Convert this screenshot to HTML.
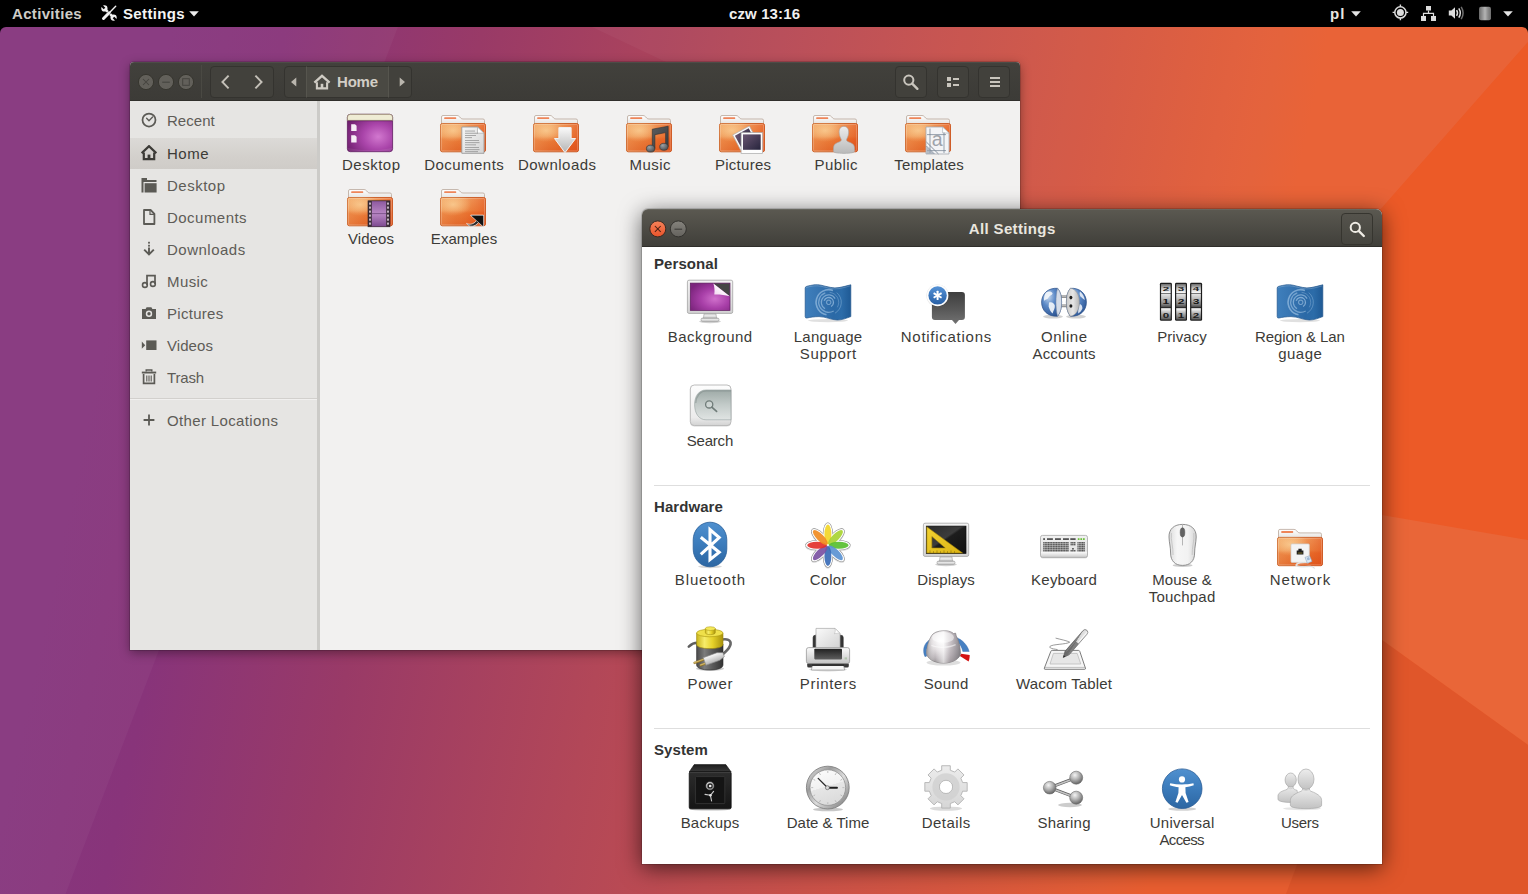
<!DOCTYPE html>
<html lang="en"><head><meta charset="utf-8"><title>Desktop</title>
<style>
html,body{margin:0;padding:0;width:1528px;height:894px;overflow:hidden;background:#000;font-family:"Liberation Sans",sans-serif;}
*{box-sizing:border-box}
.abs{position:absolute}
#wall{position:absolute;left:0;top:27px;width:1528px;height:867px;border-radius:6px 6px 0 0;overflow:hidden}
#wall svg{display:block}
#topbar{position:absolute;left:0;top:0;width:1528px;height:27px;background:#000;color:#e3e1dc;font-weight:bold;font-size:15px;line-height:27px}
#topbar span{position:absolute;top:0;white-space:nowrap}
#topbar svg{position:absolute}
.win{position:absolute;border-radius:6px 6px 0 0}
.hdr{position:absolute;left:0;top:0;right:0;border-radius:6px 6px 0 0}
.hbtn{position:absolute;border:1px solid #34332f;border-radius:4px;background:#42413c}
.ico{position:absolute;width:48px;height:48px}
.ico svg{display:block;width:48px;height:48px;overflow:visible}
.lbl{position:absolute;text-align:center;white-space:nowrap;font-size:15px;line-height:17px;color:#3c3b37}
#files .lbl{width:120px;margin-left:-60px}
#settings .lbl{width:118px;margin-left:-59px;color:#3c3b37}
.sec{position:absolute;left:12px;font-weight:bold;font-size:15px;line-height:17px;color:#333}
.sep{position:absolute;left:12px;width:716px;height:1px;background:#dedede}
.sb{position:absolute;left:37px;font-size:15px;line-height:17px;color:#5e5c57;white-space:nowrap}
.sbi{position:absolute;left:11px;width:16px;height:16px}
.sbi svg{display:block;width:16px;height:16px}
</style></head><body>
<svg width="0" height="0" style="position:absolute"><defs><linearGradient id="fBack" x1="0" y1="0" x2="0" y2="1"><stop offset="0" stop-color="#ffffff"/><stop offset="1" stop-color="#e4e2df"/></linearGradient>
<linearGradient id="fFront" x1="0" y1="0" x2="0" y2="1"><stop offset="0" stop-color="#f2a565"/><stop offset="0.45" stop-color="#ec8a45"/><stop offset="0.55" stop-color="#e8722e"/><stop offset="1" stop-color="#de5a1d"/></linearGradient>
<linearGradient id="fSide" x1="0" y1="0" x2="1" y2="0"><stop offset="0" stop-color="#f6b87a" stop-opacity="0.35"/><stop offset="0.35" stop-color="#f6b87a" stop-opacity="0.15"/><stop offset="0.7" stop-color="#e6531c" stop-opacity="0.25"/><stop offset="1" stop-color="#e04a18" stop-opacity="0.55"/></linearGradient>
<radialGradient id="fGlow" cx="0.28" cy="0.25" r="0.4"><stop offset="0" stop-color="#fbd39a" stop-opacity="0.75"/><stop offset="1" stop-color="#fbd39a" stop-opacity="0"/></radialGradient>
<linearGradient id="gPaper" x1="0" y1="0" x2="1" y2="1"><stop offset="0" stop-color="#f6f6f6"/><stop offset="1" stop-color="#d4d4d4"/></linearGradient>
<linearGradient id="gArrow" x1="0" y1="0" x2="0" y2="1"><stop offset="0" stop-color="#fafafa"/><stop offset="1" stop-color="#b4b4b4"/></linearGradient>
<linearGradient id="gNote" x1="0" y1="0" x2="1" y2="1"><stop offset="0" stop-color="#5a5c5e"/><stop offset="1" stop-color="#3a3c3e"/></linearGradient>
<radialGradient id="gBulb" cx="0.35" cy="0.3" r="0.8"><stop offset="0" stop-color="#9aa0a4"/><stop offset="1" stop-color="#43474a"/></radialGradient>
<linearGradient id="gPhoto" x1="0" y1="0" x2="1" y2="1"><stop offset="0" stop-color="#6a5672"/><stop offset="1" stop-color="#26243c"/></linearGradient>
<linearGradient id="gUser" x1="0" y1="0" x2="0" y2="1"><stop offset="0" stop-color="#ececec"/><stop offset="1" stop-color="#b9b9b9"/></linearGradient>
<radialGradient id="gDesk" cx="0.68" cy="0.6" r="0.75"><stop offset="0" stop-color="#d278cf"/><stop offset="0.45" stop-color="#aa45aa"/><stop offset="1" stop-color="#70206f"/></radialGradient>
<linearGradient id="gFilm" x1="0" y1="0" x2="0" y2="1"><stop offset="0" stop-color="#8e5aa0"/><stop offset="0.5" stop-color="#b987c4"/><stop offset="1" stop-color="#7d4a90"/></linearGradient><radialGradient id="bgScr" cx="0.62" cy="0.58" r="0.7"><stop offset="0" stop-color="#d070cc"/><stop offset="0.5" stop-color="#a83fa8"/><stop offset="1" stop-color="#7c257d"/></radialGradient>
<linearGradient id="monFrame" x1="0" y1="0" x2="0" y2="1"><stop offset="0" stop-color="#f4f4f4"/><stop offset="1" stop-color="#d2d2d2"/></linearGradient>
<linearGradient id="monStand" x1="0" y1="0" x2="0" y2="1"><stop offset="0" stop-color="#b4b4b4"/><stop offset="0.5" stop-color="#ececec"/><stop offset="1" stop-color="#bdbdbd"/></linearGradient>
<linearGradient id="curl" x1="0" y1="1" x2="1" y2="0"><stop offset="0" stop-color="#f0d0ef"/><stop offset="0.6" stop-color="#ffffff"/><stop offset="1" stop-color="#d9d9d9"/></linearGradient>
<linearGradient id="flagG" x1="0" y1="0" x2="1" y2="0"><stop offset="0" stop-color="#3f7fbc"/><stop offset="0.3" stop-color="#3775b2"/><stop offset="0.62" stop-color="#2b69a6"/><stop offset="0.8" stop-color="#2c6ca9"/><stop offset="1" stop-color="#1f5a95"/></linearGradient>
<linearGradient id="bubG" x1="0" y1="0" x2="0" y2="1"><stop offset="0" stop-color="#3e3e3e"/><stop offset="0.55" stop-color="#585858"/><stop offset="1" stop-color="#727272"/></linearGradient>
<linearGradient id="badgeG" x1="0" y1="0" x2="0" y2="1"><stop offset="0" stop-color="#5592d6"/><stop offset="1" stop-color="#2860a6"/></linearGradient>
<radialGradient id="globeG" cx="0.35" cy="0.3" r="0.85"><stop offset="0" stop-color="#c2d6ee"/><stop offset="0.4" stop-color="#5a88c6"/><stop offset="1" stop-color="#234a88"/></radialGradient>
<linearGradient id="sockG" x1="0" y1="0" x2="1" y2="0"><stop offset="0" stop-color="#c9c9c9"/><stop offset="0.5" stop-color="#e6e6e6"/><stop offset="1" stop-color="#b5b5b5"/></linearGradient>
<linearGradient id="prongG" x1="0" y1="0" x2="0" y2="1"><stop offset="0" stop-color="#e0e0e0"/><stop offset="1" stop-color="#8a8a8a"/></linearGradient><linearGradient id="pvT" x1="0" y1="0" x2="0" y2="1"><stop offset="0" stop-color="#6e6e6e"/><stop offset="0.5" stop-color="#c9c9c9"/><stop offset="1" stop-color="#ffffff"/></linearGradient>
<linearGradient id="pvM" x1="0" y1="0" x2="0" y2="1"><stop offset="0" stop-color="#e4e4e4"/><stop offset="0.35" stop-color="#bdbdbd"/><stop offset="0.8" stop-color="#7a7a7a"/><stop offset="1" stop-color="#444"/></linearGradient>
<linearGradient id="pvB" x1="0" y1="0" x2="0" y2="1"><stop offset="0" stop-color="#ffffff"/><stop offset="0.5" stop-color="#a9a9a9"/><stop offset="1" stop-color="#5a5a5a"/></linearGradient>
<linearGradient id="srO" x1="0" y1="0" x2="0" y2="1"><stop offset="0" stop-color="#fdfdfd"/><stop offset="0.8" stop-color="#ececec"/><stop offset="1" stop-color="#d2d2d2"/></linearGradient>
<linearGradient id="srI" x1="0" y1="0" x2="0" y2="1"><stop offset="0" stop-color="#9eaaa7"/><stop offset="0.5" stop-color="#c3cbc9"/><stop offset="1" stop-color="#e0e4e3"/></linearGradient>
<linearGradient id="btG" x1="0" y1="0" x2="0" y2="1"><stop offset="0" stop-color="#4f90cf"/><stop offset="0.5" stop-color="#3b7bbb"/><stop offset="1" stop-color="#2c66a2"/></linearGradient>
<filter id="flSh" x="-20%" y="-20%" width="140%" height="140%"><feDropShadow dx="0" dy="0.5" stdDeviation="0.6" flood-color="#000" flood-opacity="0.25"/></filter>
<linearGradient id="dsScr" x1="0" y1="0" x2="1" y2="1"><stop offset="0" stop-color="#2a2a2a"/><stop offset="0.45" stop-color="#3c3c3c"/><stop offset="0.5" stop-color="#1d1d1d"/><stop offset="1" stop-color="#101010"/></linearGradient>
<linearGradient id="dsY" x1="0" y1="0" x2="1" y2="1"><stop offset="0" stop-color="#f2d232"/><stop offset="1" stop-color="#dcb414"/></linearGradient>
<linearGradient id="kbG" x1="0" y1="0" x2="0" y2="1"><stop offset="0" stop-color="#f1f1f1"/><stop offset="0.7" stop-color="#e2e2e2"/><stop offset="0.78" stop-color="#f6f6f6"/><stop offset="1" stop-color="#c9c9c9"/></linearGradient>
<pattern id="kbK" x="3.2" y="21" width="1.62" height="2" patternUnits="userSpaceOnUse"><rect x="0" y="0" width="1.3" height="1.6" fill="#555"/></pattern>
<linearGradient id="msG" x1="0" y1="0" x2="1" y2="0"><stop offset="0" stop-color="#dcdcdc"/><stop offset="0.3" stop-color="#f6f6f6"/><stop offset="0.7" stop-color="#f2f2f2"/><stop offset="1" stop-color="#d4d4d4"/></linearGradient><linearGradient id="pwY" x1="0" y1="0" x2="1" y2="0"><stop offset="0" stop-color="#c9b41a"/><stop offset="0.3" stop-color="#f6ec6a"/><stop offset="0.6" stop-color="#e6d22a"/><stop offset="1" stop-color="#a8920c"/></linearGradient>
<linearGradient id="pwG" x1="0" y1="0" x2="1" y2="0"><stop offset="0" stop-color="#4a4a4a"/><stop offset="0.3" stop-color="#7c7c7c"/><stop offset="0.6" stop-color="#5a5a5a"/><stop offset="1" stop-color="#333"/></linearGradient>
<linearGradient id="pwP" x1="0" y1="0" x2="0" y2="1"><stop offset="0" stop-color="#fafafa"/><stop offset="1" stop-color="#b5b5b5"/></linearGradient>
<linearGradient id="pwGold" x1="0" y1="0" x2="0" y2="1"><stop offset="0" stop-color="#f0d890"/><stop offset="1" stop-color="#a8862a"/></linearGradient>
<linearGradient id="prB" x1="0" y1="0" x2="0" y2="1"><stop offset="0" stop-color="#fbfbfb"/><stop offset="1" stop-color="#c4c4c4"/></linearGradient>
<linearGradient id="prD" x1="0" y1="0" x2="0" y2="1"><stop offset="0" stop-color="#222"/><stop offset="1" stop-color="#5e5e5e"/></linearGradient>
<linearGradient id="prP" x1="0" y1="0" x2="1" y2="1"><stop offset="0" stop-color="#fafafa"/><stop offset="1" stop-color="#d2d2d2"/></linearGradient>
<radialGradient id="sdK" cx="0.42" cy="0.3" r="0.75"><stop offset="0" stop-color="#ffffff"/><stop offset="0.4" stop-color="#e4e0e2"/><stop offset="0.75" stop-color="#b8b2b6"/><stop offset="1" stop-color="#8e8a8c"/></radialGradient>
<linearGradient id="sdS" x1="0" y1="0" x2="1" y2="0"><stop offset="0" stop-color="#9a9698" stop-opacity="0.7"/><stop offset="0.25" stop-color="#fff" stop-opacity="0"/><stop offset="0.5" stop-color="#fff" stop-opacity="0.6"/><stop offset="0.7" stop-color="#b0a8ae" stop-opacity="0.5"/><stop offset="1" stop-color="#77747a" stop-opacity="0.7"/></linearGradient>
<linearGradient id="wcP" x1="0" y1="1" x2="1" y2="0"><stop offset="0" stop-color="#5a5a5a"/><stop offset="0.45" stop-color="#8a8a8a"/><stop offset="0.5" stop-color="#d8d8d8"/><stop offset="1" stop-color="#f2f2f2"/></linearGradient>
<linearGradient id="bkF" x1="0" y1="0" x2="0" y2="1"><stop offset="0" stop-color="#2c2c2c"/><stop offset="1" stop-color="#151515"/></linearGradient>
<linearGradient id="bkT" x1="0" y1="0" x2="0" y2="1"><stop offset="0" stop-color="#1e1e1e"/><stop offset="1" stop-color="#3a3a3a"/></linearGradient>
<radialGradient id="bkD" cx="0.4" cy="0.35" r="0.7"><stop offset="0" stop-color="#f4f4f4"/><stop offset="1" stop-color="#7c7c7c"/></radialGradient>
<linearGradient id="dtR" x1="0" y1="0" x2="1" y2="1"><stop offset="0" stop-color="#eeeeee"/><stop offset="0.3" stop-color="#9c9c9c"/><stop offset="0.55" stop-color="#dcdcdc"/><stop offset="1" stop-color="#6e6e6e"/></linearGradient>
<linearGradient id="dtF" x1="0" y1="0" x2="0.3" y2="1"><stop offset="0" stop-color="#fdfdfd"/><stop offset="0.55" stop-color="#f1f1f1"/><stop offset="0.56" stop-color="#e6e6e6"/><stop offset="1" stop-color="#dcdcdc"/></linearGradient>
<linearGradient id="grG" x1="0" y1="0" x2="0" y2="1"><stop offset="0" stop-color="#ececec"/><stop offset="1" stop-color="#d6d6d6"/></linearGradient>
<radialGradient id="shB" cx="0.4" cy="0.3" r="0.75"><stop offset="0" stop-color="#f4f4f4"/><stop offset="0.45" stop-color="#b4b4b4"/><stop offset="1" stop-color="#5a5a5a"/></radialGradient>
<linearGradient id="usG" x1="0" y1="0" x2="0" y2="1"><stop offset="0" stop-color="#ededed"/><stop offset="1" stop-color="#c2c2c2"/></linearGradient></defs></svg>
<div id="wall"><svg width="1528" height="867" viewBox="0 27 1528 867">
<defs>
<linearGradient id="wg" gradientUnits="userSpaceOnUse" x1="180" y1="-20" x2="1290" y2="215">
<stop offset="0" stop-color="#86367e"/>
<stop offset="0.1" stop-color="#88347a"/>
<stop offset="0.27" stop-color="#993a67"/>
<stop offset="0.485" stop-color="#b24758"/>
<stop offset="0.75" stop-color="#ce5346"/>
<stop offset="0.96" stop-color="#e45e35"/>
<stop offset="1" stop-color="#e95e30"/>
</linearGradient>
</defs>
<rect x="0" y="27" width="1528" height="867" fill="url(#wg)"/>
<!-- facets -->
<polygon points="0,27 398,27 65.6,894 0,894" fill="#fff" fill-opacity="0.035"/>
<polygon points="592,27 1528,27 1528,42 1380,210 1020,210 1020,62 666,62" fill="#fff" fill-opacity="0.035"/>
<polygon points="1528,42 1380,210 1380,520 1528,540" fill="#ec5a27"/>
<polygon points="1382,515 1528,540 1528,745 1382,640" fill="#e96638"/>
<polygon points="1382,640 1528,745 1528,894 1286,894" fill="#e0562a"/>
</svg></div>
<div id="topbar">
<span style="left:12px;color:#cfcdc8;letter-spacing:0.33px">Activities</span>
<svg style="left:101px;top:5px" width="16" height="16" viewBox="0 0 16 16">
<path d="M3.6,3.6 L12.4,12.4" stroke="#f2f2f2" stroke-width="2.4"/>
<circle cx="3.4" cy="3.4" r="3.1" fill="#f2f2f2"/><path d="M4.3,2.7 L2.7,4.3 L-0.6,1 L1,-0.6 Z" fill="#000"/>
<circle cx="12.6" cy="12.6" r="3.1" fill="#f2f2f2"/><path d="M13.3,11.7 L11.7,13.3 L15,16.6 L16.6,15 Z" fill="#000"/>
<path d="M12.6,3.4 L3.4,12.6" stroke="#000" stroke-width="3.4"/>
<path d="M14.7,1.3 L8.6,7.4" stroke="#f2f2f2" stroke-width="1.4" stroke-linecap="round"/>
<path d="M8.2,7.8 L2.5,13.5" stroke="#f2f2f2" stroke-width="3" stroke-linecap="round"/>
</svg>
<span style="left:123px;color:#f4f4f4;letter-spacing:0.36px">Settings</span>
<svg style="left:189px;top:11px" width="10" height="6" viewBox="0 0 10 6"><path d="M0.2,0.2 H9.8 L5,5.4 Z" fill="#ededed"/></svg>
<span style="left:729px;color:#f0f0f0;letter-spacing:0.12px">czw 13:16</span>
<span style="left:1330px;color:#e8e6e0;letter-spacing:1.2px">pl</span>
<svg style="left:1351px;top:11px" width="10" height="6" viewBox="0 0 10 6"><path d="M0.2,0.2 H9.8 L5,5.4 Z" fill="#e4e4e4"/></svg>
<svg style="left:1392px;top:4px" width="17" height="17" viewBox="0 0 17 17"><circle cx="8.4" cy="8.4" r="5.6" fill="none" stroke="#dcdcdc" stroke-width="1.5"/><circle cx="8.4" cy="8.4" r="3.5" fill="#dcdcdc"/><path d="M8.4,0.6 V3 M8.4,13.8 V16.2 M0.6,8.4 H3 M13.8,8.4 H16.2" stroke="#dcdcdc" stroke-width="1.4"/></svg>
<svg style="left:1420px;top:5px" width="17" height="17" viewBox="0 0 17 17"><path d="M6,1 H11 V5.6 H6 Z M1,11 H6 V15.9 H1 Z M11,11 H16 V15.9 H11 Z" fill="#dcdcdc"/><path d="M8.5,5.6 V8.4 M3.5,11 V8.4 H13.5 V11" fill="none" stroke="#dcdcdc" stroke-width="1.2"/></svg>
<svg style="left:1448px;top:5px" width="18" height="17" viewBox="0 0 18 17"><path d="M0.8,5.4 H3.4 L7,2.2 V13.8 L3.4,10.6 H0.8 Z" fill="#dcdcdc"/><path d="M8.6,5.2 Q10.4,8 8.6,10.8" fill="none" stroke="#dcdcdc" stroke-width="1.5"/><path d="M10.8,3.4 Q13.8,8 10.8,12.6" fill="none" stroke="#dcdcdc" stroke-width="1.5"/><path d="M13.2,1.8 Q17,8 13.2,14.2" fill="none" stroke="#6e6e6e" stroke-width="1.5"/></svg>
<svg style="left:1478px;top:6px" width="14" height="15" viewBox="0 0 14 15"><defs><linearGradient id="batG" x1="0" y1="0" x2="1" y2="0"><stop offset="0" stop-color="#6a6a6a"/><stop offset="0.25" stop-color="#8e8e8e"/><stop offset="0.5" stop-color="#b4b4b4"/><stop offset="0.75" stop-color="#8a8a8a"/><stop offset="1" stop-color="#6e6e6e"/></linearGradient></defs><filter id="batB" x="-20%" y="-20%" width="140%" height="140%"><feGaussianBlur stdDeviation="0.6"/></filter><rect x="1" y="0.8" width="12" height="13.4" rx="2" fill="url(#batG)" filter="url(#batB)"/></svg>
<svg style="left:1503px;top:11px" width="10" height="6" viewBox="0 0 10 6"><path d="M0.2,0.2 H9.8 L5,5.4 Z" fill="#e4e4e4"/></svg>
</div>
<div id="files" class="win" style="left:130px;top:62px;width:890px;height:588px;border-radius:4px 4px 0 0;background:#f2f1f0;box-shadow:0 3px 11px rgba(0,0,0,.38),0 0 0 1px rgba(0,0,0,.14)">
<div class="hdr" style="height:39px;background:linear-gradient(#42413c,#3c3b37);border-bottom:1px solid #302f2b;box-shadow:inset 0 1px 0 rgba(255,255,255,.06);border-radius:4px 4px 0 0"></div>
<div class="abs" style="left:71px;top:3px;width:1px;height:33px;background:#4a4943"></div>
<svg class="abs" style="left:7px;top:11px" width="18" height="18" viewBox="0 0 18 18"><circle cx="9" cy="9" r="7.6" fill="#62605a" stroke="#37362f" stroke-width="1"/>
<path d="M6,6 L12,12 M12,6 L6,12" stroke="#45443f" stroke-width="1.05"/>
</svg>
<svg class="abs" style="left:27px;top:11px" width="18" height="18" viewBox="0 0 18 18"><circle cx="9" cy="9" r="7.6" fill="#62605a" stroke="#37362f" stroke-width="1"/>
<path d="M5.2,9.2 H12.8" stroke="#45443f" stroke-width="1.1"/>
</svg>
<svg class="abs" style="left:47px;top:11px" width="18" height="18" viewBox="0 0 18 18"><circle cx="9" cy="9" r="7.6" fill="#62605a" stroke="#37362f" stroke-width="1"/>
<rect x="5.7" y="5.7" width="6.6" height="6.6" fill="none" stroke="#45443f" stroke-width="1"/>
</svg>
<div class="hbtn" style="left:80px;top:4px;width:64px;height:32px"></div>
<svg class="abs" style="left:80px;top:4px" width="64" height="32" viewBox="0 0 64 32"><path d="M18.6,9.6 L12.4,16 L18.6,22.4 M45.4,9.6 L51.6,16 L45.4,22.4" fill="none" stroke="#c4c0b8" stroke-width="1.9"/></svg>
<div class="hbtn" style="left:154px;top:4px;width:128px;height:32px"></div>
<div class="abs" style="left:176px;top:4px;width:83px;height:32px;background:#4a4943;border-left:1px solid #56554e;border-right:1px solid #56554e;border-top:1px solid #34332f;border-bottom:1px solid #34332f"></div>
<svg class="abs" style="left:154px;top:4px" width="128" height="32" viewBox="0 0 128 32"><path d="M12.3,11.4 V20.6 L7,16 Z M115.7,11.4 V20.6 L121,16 Z" fill="#b9b5ad"/><g transform="translate(30,9)" fill="none" stroke="#d0ccc4"><path d="M0.4,7.6 L8,0.8 L15.6,7.6" stroke-width="2.3"/><path d="M2.9,7.2 V13.4 H13.1 V7.2" stroke-width="2.1"/><rect x="6.7" y="8.8" width="2.6" height="4.4" fill="#d0ccc4" stroke="none"/></g></svg>
<div class="abs" style="left:207px;top:11px;font-weight:bold;font-size:15px;line-height:17px;color:#d2cec6;letter-spacing:-0.2px">Home</div>
<div class="hbtn" style="left:765px;top:4px;width:32px;height:32px"></div>
<div class="hbtn" style="left:807px;top:4px;width:32px;height:32px"></div>
<div class="hbtn" style="left:848px;top:4px;width:32px;height:32px"></div>
<svg class="abs" style="left:765px;top:4px" width="32" height="32" viewBox="0 0 32 32"><circle cx="13.8" cy="14.1" r="4.6" fill="none" stroke="#c9c5bd" stroke-width="2"/><path d="M17.2,17.6 L22.4,22.8" stroke="#c9c5bd" stroke-width="2.4" stroke-linecap="round"/></svg>
<svg class="abs" style="left:807px;top:4px" width="32" height="32" viewBox="0 0 32 32"><path d="M10,11 h4 v4 h-4 z M10,17 h4 v4 h-4 z M16,12 h6 v2 h-6 z M16,18 h6 v2 h-6 z" fill="#c9c5bd"/></svg>
<svg class="abs" style="left:849px;top:4px" width="32" height="32" viewBox="0 0 32 32"><path d="M11,11 h10 v2 h-10 z M11,15 h10 v2 h-10 z M11,19 h10 v2 h-10 z" fill="#c9c5bd"/></svg>
<div class="abs" style="left:0;top:39px;width:188px;height:549px;background:#e6e5e3"></div>
<div class="abs" style="left:187px;top:39px;width:3px;height:549px;background:#cccbc8"></div>
<div class="abs" style="left:0;top:76px;width:187px;height:31px;background:linear-gradient(#dcdad7,#d3d0cc 60%,#cfccc8)"></div>
<div class="abs" style="left:0;top:336px;width:187px;height:1px;background:#d2d0cd"></div><div class="abs" style="left:0;top:337px;width:187px;height:1px;background:#f1f0ef"></div>
<div class="sbi" style="top:50px"><svg viewBox="0 0 16 16"><circle cx="8" cy="8" r="6.5" fill="none" stroke="#5b5a55" stroke-width="1.75"/><path d="M5.6,6.2 L8,8.8 L11.6,5" fill="none" stroke="#5b5a55" stroke-width="1.3" stroke-linecap="round" stroke-linejoin="round"/></svg></div>
<div class="sb" style="top:50px"><span style="letter-spacing:0.04px">Recent</span></div>
<div class="sbi" style="top:83px"><svg viewBox="0 0 16 16"><path d="M0.6,8.2 L8,1.2 L15.4,8.2" fill="none" stroke="#3c3b37" stroke-width="2.3" stroke-linejoin="miter"/><path d="M2.8,7.6 V14.2 H13.2 V7.6" fill="none" stroke="#3c3b37" stroke-width="2.2"/><rect x="6.6" y="9.6" width="2.8" height="4.6" fill="#3c3b37"/></svg></div>
<div class="sb" style="top:83px;color:#3c3b37"><span style="letter-spacing:0.50px">Home</span></div>
<div class="sbi" style="top:115px"><svg viewBox="0 0 16 16"><path d="M0.5,1 H6 V3 H15.5 V5 H2.5 V15.5 H0.5 Z" fill="#5b5a55"/><rect x="3.6" y="6.2" width="12" height="9.3" fill="#5b5a55"/></svg></div>
<div class="sb" style="top:115px"><span style="letter-spacing:0.50px">Desktop</span></div>
<div class="sbi" style="top:147px"><svg viewBox="0 0 16 16"><path d="M3,1 H9.6 L13.4,4.8 V15 H3 Z" fill="none" stroke="#5b5a55" stroke-width="1.8" stroke-linejoin="round"/><path d="M9,1.2 V5.4 H13.2" fill="none" stroke="#5b5a55" stroke-width="1.2"/></svg></div>
<div class="sb" style="top:147px"><span style="letter-spacing:0.47px">Documents</span></div>
<div class="sbi" style="top:179px"><svg viewBox="0 0 16 16"><rect x="7.1" y="0.8" width="1.8" height="1.8" fill="#5b5a55"/><rect x="7.1" y="3.8" width="1.8" height="1.8" fill="#5b5a55"/><path d="M8,6.4 V12.6 M3.2,8.6 L8,13.4 L12.8,8.6" fill="none" stroke="#5b5a55" stroke-width="1.9"/></svg></div>
<div class="sb" style="top:179px"><span style="letter-spacing:0.50px">Downloads</span></div>
<div class="sbi" style="top:211px"><svg viewBox="0 0 16 16"><path d="M6,12 V2.6 H14 V11" fill="none" stroke="#5b5a55" stroke-width="1.7"/><circle cx="3.9" cy="12" r="2.4" fill="none" stroke="#5b5a55" stroke-width="1.6"/><circle cx="11.9" cy="11" r="2.4" fill="none" stroke="#5b5a55" stroke-width="1.6"/></svg></div>
<div class="sb" style="top:211px"><span style="letter-spacing:0.40px">Music</span></div>
<div class="sbi" style="top:243px"><svg viewBox="0 0 16 16"><path d="M1,4 H4.6 L5.6,2.2 H10.4 L11.4,4 H15 V14 H1 Z" fill="#5b5a55"/><circle cx="8" cy="8.8" r="3.2" fill="#e6e5e3"/><circle cx="8" cy="8.8" r="1.7" fill="#5b5a55"/></svg></div>
<div class="sb" style="top:243px"><span style="letter-spacing:0.29px">Pictures</span></div>
<div class="sbi" style="top:275px"><svg viewBox="0 0 16 16"><rect x="5.2" y="3.4" width="10.3" height="9.6" fill="#5b5a55"/><path d="M0.8,4.6 L4.2,8.2 L0.8,11.8 Z" fill="#5b5a55"/></svg></div>
<div class="sb" style="top:275px"><span style="letter-spacing:0.06px">Videos</span></div>
<div class="sbi" style="top:307px"><svg viewBox="0 0 16 16"><path d="M5.2,2.6 V1 H10.8 V2.6" fill="none" stroke="#5b5a55" stroke-width="1.4"/><rect x="0.8" y="2.6" width="14.4" height="1.9" fill="#5b5a55"/><path d="M2.6,5 V14.4 H13.4 V5" fill="none" stroke="#5b5a55" stroke-width="1.7"/><path d="M5.8,6.4 V12.4 M8,6.4 V12.4 M10.2,6.4 V12.4" stroke="#5b5a55" stroke-width="1.1"/></svg></div>
<div class="sb" style="top:307px"><span style="letter-spacing:-0.18px">Trash</span></div>
<div class="sbi" style="top:350px"><svg viewBox="0 0 16 16"><path d="M8,2.6 V13.4 M2.6,8 H13.4" stroke="#5b5a55" stroke-width="1.8"/></svg></div>
<div class="sb" style="top:350px"><span style="letter-spacing:0.36px">Other Locations</span></div>
<div class="ico" style="left:216px;top:48px"><svg viewBox="0 0 48 48"><rect x="1.4" y="4.3" width="45.2" height="37.4" rx="3" fill="url(#gDesk)" stroke="#5e1a60" stroke-width="0.8"/><path d="M1.4,10.4 V7.3 Q1.4,4.3 4.4,4.3 H43.6 Q46.6,4.3 46.6,7.3 V10.4 Z" fill="#efecd4" stroke="#8f8566" stroke-width="0.7"/><rect x="1.8" y="10.4" width="44.4" height="1" fill="#5a1a5c" opacity="0.5"/><path d="M5.2,14.2 H9 L10.6,15.8 V21 H5.2 Z M5.2,25.2 H9 L10.6,26.8 V32.4 H5.2 Z" fill="#f7eef7"/><path d="M2,38 Q24,42.5 46,38 V39 Q46,41.4 43.6,41.4 H4.4 Q2,41.4 2,39 Z" fill="#fff" opacity="0.08"/></svg></div>
<div class="lbl" style="left:241px;top:94px"><span style="letter-spacing:0.50px;margin-left:0.50px">Desktop</span></div>
<div class="ico" style="left:309px;top:48px"><svg viewBox="0 0 48 48"><path d="M2.5,14.5 V7 Q2.5,5.5 4,5.5 H18 Q19.5,5.5 20.6,6.8 L21.8,8.2 Q22.6,9 24,9 H44 Q45.5,9 45.5,10.5 V14.5 Z" fill="url(#fBack)" stroke="#b9a79a" stroke-width="0.8"/><rect x="5.2" y="7.2" width="12" height="1.8" rx="0.6" fill="#ee8559"/><rect x="1.5" y="13.5" width="45" height="28.3" rx="1.8" fill="url(#fFront)" stroke="#c4561c" stroke-width="0.9"/><rect x="1.5" y="13.5" width="45" height="28.3" rx="1.8" fill="url(#fSide)"/><rect x="1.5" y="13.5" width="45" height="28.3" rx="1.8" fill="url(#fGlow)"/><rect x="2.4" y="14.4" width="43.2" height="26.5" rx="1.2" fill="none" stroke="#fff" stroke-opacity="0.28" stroke-width="0.8"/><path d="M22.8,17 H38.5 L45,23.2 V43.3 H22.8 Z" fill="url(#gPaper)" stroke="#9a9a9a" stroke-width="0.9"/><path d="M38.5,17 V23.2 H45 Z" fill="#fdfdfd" stroke="#a8a8a8" stroke-width="0.7"/><rect x="26" y="20.6" width="10" height="0.9" fill="#8d8d8d" opacity="0.8"/><rect x="26" y="22.8" width="13" height="0.9" fill="#8d8d8d" opacity="0.8"/><rect x="26" y="25" width="11" height="0.9" fill="#8d8d8d" opacity="0.8"/><rect x="26" y="27.2" width="7" height="0.9" fill="#8d8d8d" opacity="0.8"/><rect x="26" y="30" width="14" height="0.9" fill="#8d8d8d" opacity="0.8"/><rect x="26" y="32.2" width="14.5" height="0.9" fill="#8d8d8d" opacity="0.8"/><rect x="26" y="34.4" width="11" height="0.9" fill="#8d8d8d" opacity="0.8"/><rect x="26" y="37" width="14" height="0.9" fill="#8d8d8d" opacity="0.8"/><rect x="26" y="39.2" width="14.5" height="0.9" fill="#8d8d8d" opacity="0.8"/><rect x="26" y="41.2" width="13" height="0.9" fill="#8d8d8d" opacity="0.8"/></svg></div>
<div class="lbl" style="left:334px;top:94px"><span style="letter-spacing:0.47px;margin-left:0.47px">Documents</span></div>
<div class="ico" style="left:402px;top:48px"><svg viewBox="0 0 48 48"><path d="M2.5,14.5 V7 Q2.5,5.5 4,5.5 H18 Q19.5,5.5 20.6,6.8 L21.8,8.2 Q22.6,9 24,9 H44 Q45.5,9 45.5,10.5 V14.5 Z" fill="url(#fBack)" stroke="#b9a79a" stroke-width="0.8"/><rect x="5.2" y="7.2" width="12" height="1.8" rx="0.6" fill="#ee8559"/><rect x="1.5" y="13.5" width="45" height="28.3" rx="1.8" fill="url(#fFront)" stroke="#c4561c" stroke-width="0.9"/><rect x="1.5" y="13.5" width="45" height="28.3" rx="1.8" fill="url(#fSide)"/><rect x="1.5" y="13.5" width="45" height="28.3" rx="1.8" fill="url(#fGlow)"/><rect x="2.4" y="14.4" width="43.2" height="26.5" rx="1.2" fill="none" stroke="#fff" stroke-opacity="0.28" stroke-width="0.8"/><path d="M26.9,17.6 H39.1 V28.5 H43.6 L33,42.6 L22.5,28.5 H26.9 Z" fill="url(#gArrow)" stroke="#ffffff" stroke-width="1" stroke-linejoin="round"/><path d="M26.9,17.6 H39.1 V28.5 H43.6 L33,42.6 L22.5,28.5 H26.9 Z" fill="none" stroke="#9a9a9a" stroke-opacity="0.35" stroke-width="0.4" stroke-linejoin="round"/></svg></div>
<div class="lbl" style="left:427px;top:94px"><span style="letter-spacing:0.50px;margin-left:0.50px">Downloads</span></div>
<div class="ico" style="left:495px;top:48px"><svg viewBox="0 0 48 48"><path d="M2.5,14.5 V7 Q2.5,5.5 4,5.5 H18 Q19.5,5.5 20.6,6.8 L21.8,8.2 Q22.6,9 24,9 H44 Q45.5,9 45.5,10.5 V14.5 Z" fill="url(#fBack)" stroke="#b9a79a" stroke-width="0.8"/><rect x="5.2" y="7.2" width="12" height="1.8" rx="0.6" fill="#ee8559"/><rect x="1.5" y="13.5" width="45" height="28.3" rx="1.8" fill="url(#fFront)" stroke="#c4561c" stroke-width="0.9"/><rect x="1.5" y="13.5" width="45" height="28.3" rx="1.8" fill="url(#fSide)"/><rect x="1.5" y="13.5" width="45" height="28.3" rx="1.8" fill="url(#fGlow)"/><rect x="2.4" y="14.4" width="43.2" height="26.5" rx="1.2" fill="none" stroke="#fff" stroke-opacity="0.28" stroke-width="0.8"/><path d="M27.3,19.2 L43.2,16.2 V36.6 H40.6 V22.6 L29.9,24.7 V38.4 H27.3 Z" fill="url(#gNote)" stroke="#2e3032" stroke-width="0.6" stroke-linejoin="round"/><ellipse cx="25.6" cy="38.6" rx="4.2" ry="3.5" fill="url(#gBulb)" stroke="#2e3032" stroke-width="0.6"/><ellipse cx="38.9" cy="36.8" rx="4.2" ry="3.5" fill="url(#gBulb)" stroke="#2e3032" stroke-width="0.6"/></svg></div>
<div class="lbl" style="left:520px;top:94px"><span style="letter-spacing:0.40px;margin-left:0.40px">Music</span></div>
<div class="ico" style="left:588px;top:48px"><svg viewBox="0 0 48 48"><path d="M2.5,14.5 V7 Q2.5,5.5 4,5.5 H18 Q19.5,5.5 20.6,6.8 L21.8,8.2 Q22.6,9 24,9 H44 Q45.5,9 45.5,10.5 V14.5 Z" fill="url(#fBack)" stroke="#b9a79a" stroke-width="0.8"/><rect x="5.2" y="7.2" width="12" height="1.8" rx="0.6" fill="#ee8559"/><rect x="1.5" y="13.5" width="45" height="28.3" rx="1.8" fill="url(#fFront)" stroke="#c4561c" stroke-width="0.9"/><rect x="1.5" y="13.5" width="45" height="28.3" rx="1.8" fill="url(#fSide)"/><rect x="1.5" y="13.5" width="45" height="28.3" rx="1.8" fill="url(#fGlow)"/><rect x="2.4" y="14.4" width="43.2" height="26.5" rx="1.2" fill="none" stroke="#fff" stroke-opacity="0.28" stroke-width="0.8"/><g transform="rotate(-28 27 28)"><rect x="17.5" y="19.5" width="19" height="18" fill="#fbfbfb" stroke="#b0b0b0" stroke-width="0.6"/><rect x="19.2" y="21.2" width="15.6" height="13.2" fill="url(#gPhoto)"/></g><rect x="23.1" y="22.6" width="21.5" height="21" fill="#fdfdfd" stroke="#a9a9a9" stroke-width="0.7"/><rect x="25" y="24.4" width="17.7" height="15.4" fill="url(#gPhoto)"/></svg></div>
<div class="lbl" style="left:613px;top:94px"><span style="letter-spacing:0.29px;margin-left:0.29px">Pictures</span></div>
<div class="ico" style="left:681px;top:48px"><svg viewBox="0 0 48 48"><path d="M2.5,14.5 V7 Q2.5,5.5 4,5.5 H18 Q19.5,5.5 20.6,6.8 L21.8,8.2 Q22.6,9 24,9 H44 Q45.5,9 45.5,10.5 V14.5 Z" fill="url(#fBack)" stroke="#b9a79a" stroke-width="0.8"/><rect x="5.2" y="7.2" width="12" height="1.8" rx="0.6" fill="#ee8559"/><rect x="1.5" y="13.5" width="45" height="28.3" rx="1.8" fill="url(#fFront)" stroke="#c4561c" stroke-width="0.9"/><rect x="1.5" y="13.5" width="45" height="28.3" rx="1.8" fill="url(#fSide)"/><rect x="1.5" y="13.5" width="45" height="28.3" rx="1.8" fill="url(#fGlow)"/><rect x="2.4" y="14.4" width="43.2" height="26.5" rx="1.2" fill="none" stroke="#fff" stroke-opacity="0.28" stroke-width="0.8"/><path d="M32.9,16.4 C36.6,16.4 37.9,19.6 37.6,23 C37.3,26.2 36.2,28 35.6,29.2 C35.3,30.4 35.8,31.2 37.2,31.8 C40.6,33 43,34 43.4,37 L43.6,41 C43.6,42.6 40,43.4 33,43.4 C26,43.4 22.4,42.6 22.4,41 L22.6,37 C23,34 25.2,33 28.6,31.8 C30,31.2 30.5,30.4 30.2,29.2 C29.6,28 28.5,26.2 28.2,23 C27.9,19.6 29.2,16.4 32.9,16.4 Z" fill="url(#gUser)" stroke="#a5a5a5" stroke-width="0.6"/></svg></div>
<div class="lbl" style="left:706px;top:94px"><span style="letter-spacing:0.44px;margin-left:0.44px">Public</span></div>
<div class="ico" style="left:774px;top:48px"><svg viewBox="0 0 48 48"><path d="M2.5,14.5 V7 Q2.5,5.5 4,5.5 H18 Q19.5,5.5 20.6,6.8 L21.8,8.2 Q22.6,9 24,9 H44 Q45.5,9 45.5,10.5 V14.5 Z" fill="url(#fBack)" stroke="#b9a79a" stroke-width="0.8"/><rect x="5.2" y="7.2" width="12" height="1.8" rx="0.6" fill="#ee8559"/><rect x="1.5" y="13.5" width="45" height="28.3" rx="1.8" fill="url(#fFront)" stroke="#c4561c" stroke-width="0.9"/><rect x="1.5" y="13.5" width="45" height="28.3" rx="1.8" fill="url(#fSide)"/><rect x="1.5" y="13.5" width="45" height="28.3" rx="1.8" fill="url(#fGlow)"/><rect x="2.4" y="14.4" width="43.2" height="26.5" rx="1.2" fill="none" stroke="#fff" stroke-opacity="0.28" stroke-width="0.8"/><path d="M22,17 H38.6 L45,23 V44 H22 Z" fill="#f3f4f6" stroke="#a5aab0" stroke-width="0.8"/><path d="M38.6,17 V23 H45 Z" fill="#fff" stroke="#a5aab0" stroke-width="0.6"/><path d="M26,18.5 V43 M40,22.5 V43 M23,24.6 H42 M23,40.6 H42" stroke="#6f7d8c" stroke-width="0.7" fill="none"/><path d="M22.4,32 L34.5,44 M22.4,36 L30.4,44" stroke="#7c8896" stroke-width="0.9" fill="none"/><path d="M22.4,36.5 L29.9,44 H22.4 Z" fill="#9aa4b0" opacity="0.7"/><text x="33.2" y="36.2" font-family="Liberation Sans, sans-serif" font-size="19.5" text-anchor="middle" fill="#9ea3aa">a</text></svg></div>
<div class="lbl" style="left:799px;top:94px"><span style="letter-spacing:0.12px;margin-left:0.12px">Templates</span></div>
<div class="ico" style="left:216px;top:122px"><svg viewBox="0 0 48 48"><path d="M2.5,14.5 V7 Q2.5,5.5 4,5.5 H18 Q19.5,5.5 20.6,6.8 L21.8,8.2 Q22.6,9 24,9 H44 Q45.5,9 45.5,10.5 V14.5 Z" fill="url(#fBack)" stroke="#b9a79a" stroke-width="0.8"/><rect x="5.2" y="7.2" width="12" height="1.8" rx="0.6" fill="#ee8559"/><rect x="1.5" y="13.5" width="45" height="28.3" rx="1.8" fill="url(#fFront)" stroke="#c4561c" stroke-width="0.9"/><rect x="1.5" y="13.5" width="45" height="28.3" rx="1.8" fill="url(#fSide)"/><rect x="1.5" y="13.5" width="45" height="28.3" rx="1.8" fill="url(#fGlow)"/><rect x="2.4" y="14.4" width="43.2" height="26.5" rx="1.2" fill="none" stroke="#fff" stroke-opacity="0.28" stroke-width="0.8"/><rect x="22" y="16.8" width="22" height="26" fill="#3a2c36" stroke="#2a1e28" stroke-width="0.6"/><rect x="25.8" y="17.2" width="14.4" height="25.2" fill="url(#gFilm)"/><rect x="25.8" y="29.2" width="14.4" height="0.9" fill="#5e3a6c" opacity="0.7"/><rect x="23.1" y="18.4" width="1.8" height="2.3" rx="0.4" fill="#d2c2d0"/><rect x="41.1" y="18.4" width="1.8" height="2.3" rx="0.4" fill="#d2c2d0"/><rect x="23.1" y="22.4" width="1.8" height="2.3" rx="0.4" fill="#d2c2d0"/><rect x="41.1" y="22.4" width="1.8" height="2.3" rx="0.4" fill="#d2c2d0"/><rect x="23.1" y="26.4" width="1.8" height="2.3" rx="0.4" fill="#d2c2d0"/><rect x="41.1" y="26.4" width="1.8" height="2.3" rx="0.4" fill="#d2c2d0"/><rect x="23.1" y="30.4" width="1.8" height="2.3" rx="0.4" fill="#d2c2d0"/><rect x="41.1" y="30.4" width="1.8" height="2.3" rx="0.4" fill="#d2c2d0"/><rect x="23.1" y="34.4" width="1.8" height="2.3" rx="0.4" fill="#d2c2d0"/><rect x="41.1" y="34.4" width="1.8" height="2.3" rx="0.4" fill="#d2c2d0"/><rect x="23.1" y="38.4" width="1.8" height="2.3" rx="0.4" fill="#d2c2d0"/><rect x="41.1" y="38.4" width="1.8" height="2.3" rx="0.4" fill="#d2c2d0"/></svg></div>
<div class="lbl" style="left:241px;top:168px"><span style="letter-spacing:0.06px;margin-left:0.06px">Videos</span></div>
<div class="ico" style="left:309px;top:122px"><svg viewBox="0 0 48 48"><path d="M2.5,14.5 V7 Q2.5,5.5 4,5.5 H18 Q19.5,5.5 20.6,6.8 L21.8,8.2 Q22.6,9 24,9 H44 Q45.5,9 45.5,10.5 V14.5 Z" fill="url(#fBack)" stroke="#b9a79a" stroke-width="0.8"/><rect x="5.2" y="7.2" width="12" height="1.8" rx="0.6" fill="#ee8559"/><rect x="1.5" y="13.5" width="45" height="28.3" rx="1.8" fill="url(#fFront)" stroke="#c4561c" stroke-width="0.9"/><rect x="1.5" y="13.5" width="45" height="28.3" rx="1.8" fill="url(#fSide)"/><rect x="1.5" y="13.5" width="45" height="28.3" rx="1.8" fill="url(#fGlow)"/><rect x="2.4" y="14.4" width="43.2" height="26.5" rx="1.2" fill="none" stroke="#fff" stroke-opacity="0.28" stroke-width="0.8"/><path d="M32,31.4 H44.3 V42.4 Z" fill="#111" stroke="#fff" stroke-width="1.1" stroke-linejoin="round"/><path d="M27.6,39.4 C30.5,41 34.5,40.4 37.6,36.6 L39.6,38.4 C36,43 30.6,43.6 27.6,39.4 Z" fill="#2a2a2a" stroke="#fff" stroke-width="0.7" stroke-linejoin="round"/><path d="M32,31.4 H44.3 V42.4 Z" fill="#111"/></svg></div>
<div class="lbl" style="left:334px;top:168px"><span style="letter-spacing:0.07px;margin-left:0.07px">Examples</span></div>
</div>
<div id="settings" class="win" style="left:642px;top:209px;width:740px;height:655px;background:#fff;box-shadow:0 4px 22px rgba(0,0,0,.62),0 0 0 1px rgba(0,0,0,.14)">
<div class="hdr" style="height:38px;background:linear-gradient(#5b5951,#403f3a);border-bottom:1px solid #2f2e2a;box-shadow:inset 0 1px 0 rgba(255,255,255,.08)"></div>
<svg class="abs" style="left:6px;top:10px" width="42" height="20" viewBox="0 0 42 20"><defs><linearGradient id="cbg" x1="0" y1="0" x2="0" y2="1"><stop offset="0" stop-color="#f5835a"/><stop offset="1" stop-color="#e9532a"/></linearGradient><linearGradient id="mbg" x1="0" y1="0" x2="0" y2="1"><stop offset="0" stop-color="#85837d"/><stop offset="1" stop-color="#64625d"/></linearGradient></defs><circle cx="9.8" cy="9.9" r="8" fill="url(#cbg)" stroke="#3b2a22" stroke-width="1"/><path d="M6.9,7 L12.7,12.8 M12.7,7 L6.9,12.8" stroke="#4a2014" stroke-width="1.05"/><circle cx="30.3" cy="9.9" r="8" fill="url(#mbg)" stroke="#33322e" stroke-width="1"/><path d="M26.5,10.2 H34.1" stroke="#3e3d39" stroke-width="1.1"/></svg>
<div class="abs" style="left:0;top:11px;width:740px;text-align:center;font-weight:bold;font-size:15px;line-height:17px;color:#e9e6df;letter-spacing:0.36px;padding-left:0.36px">All Settings</div>
<div class="hbtn" style="left:699px;top:4px;width:32px;height:32px;background:linear-gradient(#55534c,#46453f);border-color:#36352f"></div>
<svg class="abs" style="left:699px;top:4px" width="32" height="32" viewBox="0 0 32 32"><circle cx="14.3" cy="14.4" r="4.6" fill="none" stroke="#eeebe4" stroke-width="2"/><path d="M17.7,17.9 L22.8,23" stroke="#eeebe4" stroke-width="2.4" stroke-linecap="round"/></svg>
<div class="sec" style="top:46px"><span style="letter-spacing:0.07px">Personal</span></div>
<div class="ico" style="left:44px;top:69px"><svg viewBox="0 0 48 48"><ellipse cx="24" cy="43.6" rx="11" ry="1.6" fill="#000" opacity="0.18"/><path d="M18.2,35 H29.8 L30.6,40.4 H17.4 Z" fill="url(#monStand)" stroke="#9c9c9c" stroke-width="0.6"/><rect x="15" y="40" width="18" height="3.4" rx="1.6" fill="url(#monStand)" stroke="#9a9a9a" stroke-width="0.6"/><rect x="1.4" y="2.2" width="45.3" height="33.2" rx="1.6" fill="url(#monFrame)" stroke="#a3a3a3" stroke-width="0.8"/><rect x="4.3" y="5.1" width="39.7" height="27.3" fill="url(#bgScr)" stroke="#5d1a5e" stroke-width="0.7"/><path d="M27.4,5.4 H43.7 V18.2 Z" fill="#454545"/><path d="M27.4,5.4 C28.6,9 28.8,12.6 28.3,16.6 C33,16.4 38.5,16.9 43.7,18.2 Z" fill="url(#curl)"/></svg></div>
<div class="lbl" style="left:68px;top:119px"><span style="letter-spacing:0.49px;margin-left:0.49px">Background</span></div>
<div class="ico" style="left:162px;top:69px"><svg viewBox="0 0 48 48"><ellipse cx="24" cy="42.6" rx="20" ry="1.6" fill="#000" opacity="0.12"/><path d="M1.2,10.2 Q1.2,8.6 2.8,8.3 C8,7 12,6.2 17,7.2 C24,8.8 29,10.6 35,9.6 C39,9 42.5,7.8 46.8,6.8 V38.6 C42,40.2 38.5,42 33.5,42 C27,42 22,38.6 15,38.6 C10,38.6 6,39.4 2.8,40 Q1.2,40.2 1.2,38.6 Z" fill="url(#flagG)" stroke="#1f548c" stroke-width="0.7"/><path d="M22.51,36.71 A12.60,12.60 0 1 1 29.01,12.46" fill="none" stroke="#b5d3ee" stroke-opacity="0.55" stroke-width="1.6"/><path d="M32.80,14.65 A12.60,12.60 0 0 1 31.00,35.21" fill="none" stroke="#b5d3ee" stroke-opacity="0.35" stroke-width="1.0"/><path d="M29.70,32.96 A10.00,10.00 0 1 1 21.28,14.90" fill="none" stroke="#b5d3ee" stroke-opacity="0.50" stroke-width="1.3"/><path d="M25.57,14.34 A10.00,10.00 0 0 1 33.36,29.30" fill="none" stroke="#b5d3ee" stroke-opacity="0.35" stroke-width="0.9"/><path d="M21.00,30.71 A7.40,7.40 0 1 1 31.11,20.60" fill="none" stroke="#b5d3ee" stroke-opacity="0.55" stroke-width="1.2"/><path d="M20.19,22.66 A4.80,4.80 0 1 1 27.10,28.46" fill="none" stroke="#b5d3ee" stroke-opacity="0.60" stroke-width="1.3"/><path d="M26.90,24.30 A2.20,2.20 0 1 1 26.90,24.26" fill="none" stroke="#b5d3ee" stroke-opacity="0.50" stroke-width="1.2"/><path d="M2,9.4 C8,8 12,7.2 17,8.2 C24,9.8 29,11.6 35,10.6 C39,10 42.5,8.8 46,7.9" fill="none" stroke="#fff" stroke-opacity="0.25" stroke-width="0.8"/></svg></div>
<div class="lbl" style="left:186px;top:119px"><span style="letter-spacing:0.24px;margin-left:0.24px">Language</span><br><span style="letter-spacing:0.65px;margin-left:0.65px">Support</span></div>
<div class="ico" style="left:280px;top:69px"><svg viewBox="0 0 48 48"><path d="M12.9,13.9 H39.9 Q42.9,13.9 42.9,16.9 V38.9 Q42.9,41.9 39.9,41.9 H37 L33.5,46 L30,41.9 H12.9 Q9.9,41.9 9.9,38.9 V16.9 Q9.9,13.9 12.9,13.9 Z" fill="url(#bubG)"/><circle cx="15.6" cy="17.6" r="11.2" fill="#000" opacity="0.12"/><circle cx="15.6" cy="17.4" r="10.8" fill="#fdfdfd"/><circle cx="15.6" cy="17.4" r="9.2" fill="url(#badgeG)"/><rect x="-1" y="-4.6" width="2" height="9.2" rx="0.4" transform="translate(15.6,17.4) rotate(0)" fill="#fff"/><rect x="-1" y="-4.6" width="2" height="9.2" rx="0.4" transform="translate(15.6,17.4) rotate(60)" fill="#fff"/><rect x="-1" y="-4.6" width="2" height="9.2" rx="0.4" transform="translate(15.6,17.4) rotate(120)" fill="#fff"/></svg></div>
<div class="lbl" style="left:304px;top:119px"><span style="letter-spacing:0.73px;margin-left:0.73px">Notifications</span></div>
<div class="ico" style="left:398px;top:69px"><svg viewBox="0 0 48 48"><ellipse cx="13" cy="38.6" rx="10" ry="2" fill="#000" opacity="0.18"/><ellipse cx="36" cy="38.6" rx="10" ry="2" fill="#000" opacity="0.18"/><rect x="19.6" y="17.2" width="8" height="2.6" fill="url(#prongG)" stroke="#777" stroke-width="0.4"/><rect x="19.6" y="26.4" width="8" height="2.6" fill="url(#prongG)" stroke="#777" stroke-width="0.4"/><path d="M17.6,10.3 C8,9.6 1.6,16 1.6,24.2 C1.6,32.6 8,38.9 17.6,38.2 C20.6,34.6 21.6,29.6 21.6,24.2 C21.6,18.8 20.6,13.8 17.6,10.3 Z" fill="url(#globeG)" stroke="#2a4f88" stroke-width="0.7"/><path d="M6,14.6 C8.6,12.8 11.4,13.2 12.6,15.4 C11.8,17.6 9.2,17.2 8.4,19.8 C7.2,22.2 5.2,21.2 4,23 C3.8,19.6 4.4,16.8 6,14.6 Z M9,24.6 C11.6,23.4 14.2,24.8 14.8,27.6 C15.2,30.6 13.4,32.4 12.6,35.6 C10.4,33.8 9.4,31 8.6,28.6 Z" fill="#f4f7fb" opacity="0.9"/><path d="M17.6,10.3 C20.6,13.8 21.6,18.8 21.6,24.2 C21.6,29.6 20.6,34.6 17.6,38.2 C16.4,34 16,29 16,24.2 C16,19.4 16.4,14.4 17.6,10.3 Z" fill="#d4dce8" stroke="#7a88a0" stroke-width="0.5"/><path d="M30.4,10.3 C40,9.6 46.4,16 46.4,24.2 C46.4,32.6 40,38.9 30.4,38.2 C27.4,34.6 26.4,29.6 26.4,24.2 C26.4,18.8 27.4,13.8 30.4,10.3 Z" fill="url(#globeG)" stroke="#2a4f88" stroke-width="0.7"/><path d="M40,13.6 C42.6,15.6 44.4,18.6 44.8,22 C43.2,21.6 42.2,19.4 40.6,18.8 C39.4,17 39.4,15.2 40,13.6 Z M39.6,26 C41.4,26.4 42.6,28.2 42.4,30.6 C41.6,32.8 40,34.6 38.2,35.6 C38,32.2 38.6,29 39.6,26 Z" fill="#f4f7fb" opacity="0.85"/><path d="M30.4,10.3 C27.4,13.8 26.4,18.8 26.4,24.2 C26.4,29.6 27.4,34.6 30.4,38.2 C36,37.6 39.4,31.4 39.4,24.2 C39.4,17 36,10.9 30.4,10.3 Z" fill="url(#sockG)" stroke="#8e8e8e" stroke-width="0.5"/><ellipse cx="30.9" cy="19.6" rx="1.5" ry="1.8" fill="#1c1c1c"/><ellipse cx="30.9" cy="28" rx="1.5" ry="1.8" fill="#1c1c1c"/></svg></div>
<div class="lbl" style="left:422px;top:119px"><span style="letter-spacing:0.56px;margin-left:0.56px">Online</span><br><span style="letter-spacing:0.20px;margin-left:0.20px">Accounts</span></div>
<div class="ico" style="left:516px;top:69px"><svg viewBox="0 0 48 48"><rect x="1.9" y="4.8" width="12" height="38" rx="1.4" fill="#1c1c1c"/><rect x="3.1" y="6" width="9.6" height="9.4" fill="url(#pvT)"/><rect x="3.1" y="16" width="9.6" height="13.4" fill="url(#pvM)"/><rect x="3.1" y="30.2" width="9.6" height="11.4" fill="url(#pvB)"/><text transform="translate(7.9,12.8) scale(1.55,0.8)" text-anchor="middle" font-family="Liberation Sans, sans-serif" font-size="7.5" font-weight="bold" fill="#222">2</text><text transform="translate(7.9,25.8) scale(1.6,1.02)" text-anchor="middle" font-family="Liberation Sans, sans-serif" font-size="7.5" font-weight="bold" fill="#161616">1</text><text transform="translate(7.9,39.8) scale(1.55,1)" text-anchor="middle" font-family="Liberation Sans, sans-serif" font-size="7.5" font-weight="bold" fill="#1c1c1c">0</text><rect x="17.0" y="4.8" width="12" height="38" rx="1.4" fill="#1c1c1c"/><rect x="18.2" y="6" width="9.6" height="9.4" fill="url(#pvT)"/><rect x="18.2" y="16" width="9.6" height="13.4" fill="url(#pvM)"/><rect x="18.2" y="30.2" width="9.6" height="11.4" fill="url(#pvB)"/><text transform="translate(23.0,12.8) scale(1.55,0.8)" text-anchor="middle" font-family="Liberation Sans, sans-serif" font-size="7.5" font-weight="bold" fill="#222">3</text><text transform="translate(23.0,25.8) scale(1.6,1.02)" text-anchor="middle" font-family="Liberation Sans, sans-serif" font-size="7.5" font-weight="bold" fill="#161616">2</text><text transform="translate(23.0,39.8) scale(1.55,1)" text-anchor="middle" font-family="Liberation Sans, sans-serif" font-size="7.5" font-weight="bold" fill="#1c1c1c">1</text><rect x="32.1" y="4.8" width="12" height="38" rx="1.4" fill="#1c1c1c"/><rect x="33.3" y="6" width="9.6" height="9.4" fill="url(#pvT)"/><rect x="33.3" y="16" width="9.6" height="13.4" fill="url(#pvM)"/><rect x="33.3" y="30.2" width="9.6" height="11.4" fill="url(#pvB)"/><text transform="translate(38.1,12.8) scale(1.55,0.8)" text-anchor="middle" font-family="Liberation Sans, sans-serif" font-size="7.5" font-weight="bold" fill="#222">4</text><text transform="translate(38.1,25.8) scale(1.6,1.02)" text-anchor="middle" font-family="Liberation Sans, sans-serif" font-size="7.5" font-weight="bold" fill="#161616">3</text><text transform="translate(38.1,39.8) scale(1.55,1)" text-anchor="middle" font-family="Liberation Sans, sans-serif" font-size="7.5" font-weight="bold" fill="#1c1c1c">2</text></svg></div>
<div class="lbl" style="left:540px;top:119px"><span style="letter-spacing:0.05px;margin-left:0.05px">Privacy</span></div>
<div class="ico" style="left:634px;top:69px"><svg viewBox="0 0 48 48"><ellipse cx="24" cy="42.6" rx="20" ry="1.6" fill="#000" opacity="0.12"/><path d="M1.2,10.2 Q1.2,8.6 2.8,8.3 C8,7 12,6.2 17,7.2 C24,8.8 29,10.6 35,9.6 C39,9 42.5,7.8 46.8,6.8 V38.6 C42,40.2 38.5,42 33.5,42 C27,42 22,38.6 15,38.6 C10,38.6 6,39.4 2.8,40 Q1.2,40.2 1.2,38.6 Z" fill="url(#flagG)" stroke="#1f548c" stroke-width="0.7"/><path d="M22.51,36.71 A12.60,12.60 0 1 1 29.01,12.46" fill="none" stroke="#b5d3ee" stroke-opacity="0.55" stroke-width="1.6"/><path d="M32.80,14.65 A12.60,12.60 0 0 1 31.00,35.21" fill="none" stroke="#b5d3ee" stroke-opacity="0.35" stroke-width="1.0"/><path d="M29.70,32.96 A10.00,10.00 0 1 1 21.28,14.90" fill="none" stroke="#b5d3ee" stroke-opacity="0.50" stroke-width="1.3"/><path d="M25.57,14.34 A10.00,10.00 0 0 1 33.36,29.30" fill="none" stroke="#b5d3ee" stroke-opacity="0.35" stroke-width="0.9"/><path d="M21.00,30.71 A7.40,7.40 0 1 1 31.11,20.60" fill="none" stroke="#b5d3ee" stroke-opacity="0.55" stroke-width="1.2"/><path d="M20.19,22.66 A4.80,4.80 0 1 1 27.10,28.46" fill="none" stroke="#b5d3ee" stroke-opacity="0.60" stroke-width="1.3"/><path d="M26.90,24.30 A2.20,2.20 0 1 1 26.90,24.26" fill="none" stroke="#b5d3ee" stroke-opacity="0.50" stroke-width="1.2"/><path d="M2,9.4 C8,8 12,7.2 17,8.2 C24,9.8 29,11.6 35,10.6 C39,10 42.5,8.8 46,7.9" fill="none" stroke="#fff" stroke-opacity="0.25" stroke-width="0.8"/></svg></div>
<div class="lbl" style="left:658px;top:119px"><span style="letter-spacing:-0.10px;margin-left:-0.10px">Region &amp; Lan</span><br><span style="letter-spacing:0.50px;margin-left:0.50px">guage</span></div>
<div class="ico" style="left:44px;top:173px"><svg viewBox="0 0 48 48"><rect x="4.3" y="3.6" width="40.7" height="41" rx="4" fill="#000" opacity="0.12"/><rect x="4.3" y="3" width="40.7" height="40.6" rx="4" fill="url(#srO)" stroke="#b4b4b4" stroke-width="0.9"/><path d="M45,8 H20 C12.6,8 8.6,14.5 8.6,22.5 C8.6,31 12.6,37.8 20,37.8 H45 Z" fill="url(#srI)" stroke="#94a09d" stroke-width="0.6"/><path d="M45,9 H20.5 C14,9 10,14.5 9.8,21" fill="none" stroke="#7d8a87" stroke-opacity="0.5" stroke-width="1.2"/><circle cx="23.2" cy="22.4" r="3.6" fill="#d5dcda" fill-opacity="0.6" stroke="#707c79" stroke-width="1.3"/><path d="M25.8,25.2 L30.6,29.4" stroke="#707c79" stroke-width="1.7" stroke-linecap="round"/></svg></div>
<div class="lbl" style="left:68px;top:223px"><span style="letter-spacing:-0.20px;margin-left:-0.20px">Search</span></div>
<div class="sep" style="top:276px"></div>
<div class="sec" style="top:289px"><span style="letter-spacing:0.06px">Hardware</span></div>
<div class="ico" style="left:44px;top:312px"><svg viewBox="0 0 48 48"><ellipse cx="24" cy="45.6" rx="12" ry="1.6" fill="#000" opacity="0.15"/><rect x="7.2" y="1.2" width="33.6" height="44.6" rx="16.8" ry="17.6" fill="url(#btG)" stroke="#2a5f99" stroke-width="0.8"/><path d="M14.8,16.2 L33.2,31.2 L24,38.6 V8.6 L33.2,16.6 L14.8,33.4" fill="none" stroke="#fff" stroke-width="3.1" stroke-linejoin="miter"/></svg></div>
<div class="lbl" style="left:68px;top:362px"><span style="letter-spacing:0.86px;margin-left:0.86px">Bluetooth</span></div>
<div class="ico" style="left:162px;top:312px"><svg viewBox="0 0 48 48"><g filter="url(#flSh)"><g transform="translate(23.9,24.2)"><ellipse cx="0" cy="-11.2" rx="4.5" ry="10.9" transform="rotate(0)" fill="#fff" stroke="#8e8e8e" stroke-width="1.1"/><ellipse cx="0" cy="-11.2" rx="4.5" ry="10.9" transform="rotate(45)" fill="#fff" stroke="#8e8e8e" stroke-width="1.1"/><ellipse cx="0" cy="-11.2" rx="4.5" ry="10.9" transform="rotate(90)" fill="#fff" stroke="#8e8e8e" stroke-width="1.1"/><ellipse cx="0" cy="-11.2" rx="4.5" ry="10.9" transform="rotate(135)" fill="#fff" stroke="#8e8e8e" stroke-width="1.1"/><ellipse cx="0" cy="-11.2" rx="4.5" ry="10.9" transform="rotate(180)" fill="#fff" stroke="#8e8e8e" stroke-width="1.1"/><ellipse cx="0" cy="-11.2" rx="4.5" ry="10.9" transform="rotate(225)" fill="#fff" stroke="#8e8e8e" stroke-width="1.1"/><ellipse cx="0" cy="-11.2" rx="4.5" ry="10.9" transform="rotate(270)" fill="#fff" stroke="#8e8e8e" stroke-width="1.1"/><ellipse cx="0" cy="-11.2" rx="4.5" ry="10.9" transform="rotate(315)" fill="#fff" stroke="#8e8e8e" stroke-width="1.1"/><ellipse cx="0" cy="-11.2" rx="4.5" ry="10.9" transform="rotate(0)" fill="#fff"/><ellipse cx="0" cy="-11.2" rx="4.5" ry="10.9" transform="rotate(45)" fill="#fff"/><ellipse cx="0" cy="-11.2" rx="4.5" ry="10.9" transform="rotate(90)" fill="#fff"/><ellipse cx="0" cy="-11.2" rx="4.5" ry="10.9" transform="rotate(135)" fill="#fff"/><ellipse cx="0" cy="-11.2" rx="4.5" ry="10.9" transform="rotate(180)" fill="#fff"/><ellipse cx="0" cy="-11.2" rx="4.5" ry="10.9" transform="rotate(225)" fill="#fff"/><ellipse cx="0" cy="-11.2" rx="4.5" ry="10.9" transform="rotate(270)" fill="#fff"/><ellipse cx="0" cy="-11.2" rx="4.5" ry="10.9" transform="rotate(315)" fill="#fff"/><ellipse cx="0" cy="-10.8" rx="3.5" ry="9.9" transform="rotate(0)" fill="#f2d628" fill-opacity="0.92"/><ellipse cx="0" cy="-10.8" rx="3.5" ry="9.9" transform="rotate(45)" fill="#a9d432" fill-opacity="0.92"/><ellipse cx="0" cy="-10.8" rx="3.5" ry="9.9" transform="rotate(90)" fill="#58bf30" fill-opacity="0.92"/><ellipse cx="0" cy="-10.8" rx="3.5" ry="9.9" transform="rotate(135)" fill="#5b93d2" fill-opacity="0.92"/><ellipse cx="0" cy="-10.8" rx="3.5" ry="9.9" transform="rotate(180)" fill="#3a6bb6" fill-opacity="0.92"/><ellipse cx="0" cy="-10.8" rx="3.5" ry="9.9" transform="rotate(225)" fill="#7b50a2" fill-opacity="0.92"/><ellipse cx="0" cy="-10.8" rx="3.5" ry="9.9" transform="rotate(270)" fill="#e32f2a" fill-opacity="0.92"/><ellipse cx="0" cy="-10.8" rx="3.5" ry="9.9" transform="rotate(315)" fill="#f08b1f" fill-opacity="0.92"/></g></g></svg></div>
<div class="lbl" style="left:186px;top:362px"><span style="letter-spacing:0.20px;margin-left:0.20px">Color</span></div>
<div class="ico" style="left:280px;top:312px"><svg viewBox="0 0 48 48"><ellipse cx="24" cy="43.6" rx="11" ry="1.6" fill="#000" opacity="0.18"/><path d="M18.2,35 H29.8 L30.6,40.4 H17.4 Z" fill="url(#monStand)" stroke="#9c9c9c" stroke-width="0.6"/><rect x="15" y="40" width="18" height="3.4" rx="1.6" fill="url(#monStand)" stroke="#9a9a9a" stroke-width="0.6"/><rect x="1.4" y="2.2" width="45.3" height="33.2" rx="1.6" fill="url(#monFrame)" stroke="#a3a3a3" stroke-width="0.8"/><rect x="4.3" y="5.1" width="39.7" height="27.3" fill="url(#dsScr)" stroke="#0c0c0c" stroke-width="0.7"/><path d="M4.8,5.8 L40.6,32 H4.8 Z M9.9,15.6 V26.9 H23.2 Z" fill="url(#dsY)" fill-rule="evenodd" stroke="#9a7c08" stroke-width="0.6"/><path d="M8.0,32 v-2.6" stroke="#8a6f08" stroke-width="0.6"/><path d="M11.5,32 v-1.8" stroke="#8a6f08" stroke-width="0.6"/><path d="M15.0,32 v-2.6" stroke="#8a6f08" stroke-width="0.6"/><path d="M18.5,32 v-1.8" stroke="#8a6f08" stroke-width="0.6"/><path d="M22.0,32 v-2.6" stroke="#8a6f08" stroke-width="0.6"/><path d="M25.5,32 v-1.8" stroke="#8a6f08" stroke-width="0.6"/><path d="M29.0,32 v-2.6" stroke="#8a6f08" stroke-width="0.6"/><path d="M32.5,32 v-1.8" stroke="#8a6f08" stroke-width="0.6"/></svg></div>
<div class="lbl" style="left:304px;top:362px"><span style="letter-spacing:0.13px;margin-left:0.13px">Displays</span></div>
<div class="ico" style="left:398px;top:312px"><svg viewBox="0 0 48 48"><rect x="0.5" y="15" width="47" height="22.4" rx="2" fill="#000" opacity="0.12"/><rect x="0.5" y="14.4" width="47" height="22" rx="2" fill="url(#kbG)" stroke="#a6a6a6" stroke-width="0.8"/><rect x="3.2" y="17.2" width="1.8" height="1.8" fill="#555"/><rect x="7.0" y="17.2" width="5.9" height="1.8" fill="#555"/><rect x="15.0" y="17.2" width="5.9" height="1.8" fill="#555"/><rect x="23.0" y="17.2" width="5.9" height="1.8" fill="#555"/><rect x="30.3" y="17.2" width="5.3" height="1.8" fill="#555"/><rect x="37.8" y="17.2" width="1.7" height="1.8" fill="#6cbf3c"/><rect x="40.4" y="17.2" width="1.7" height="1.8" fill="#6cbf3c"/><rect x="43.0" y="17.2" width="1.7" height="1.8" fill="#6cbf3c"/><rect x="3.2" y="21" width="25.7" height="9.8" fill="url(#kbK)"/><rect x="30.3" y="21" width="5.3" height="3.6" fill="url(#kbK)"/><rect x="32.1" y="27" width="1.7" height="1.6" fill="#555"/><rect x="30.3" y="29" width="5.3" height="1.8" fill="url(#kbK)"/><rect x="37.4" y="21" width="7.6" height="9.8" fill="url(#kbK)"/></svg></div>
<div class="lbl" style="left:422px;top:362px"><span style="letter-spacing:0.23px;margin-left:0.23px">Keyboard</span></div>
<div class="ico" style="left:516px;top:312px"><svg viewBox="0 0 48 48"><ellipse cx="24.6" cy="44.4" rx="10" ry="1.6" fill="#000" opacity="0.2"/><path d="M24.6,3.4 C33,3.4 38.4,8 38.2,16 C38,22 36.6,26 36.6,32 C36.6,40 32,44.4 24.6,44.4 C17.2,44.4 12.6,40 12.6,32 C12.6,26 11.2,22 11,16 C10.8,8 16.2,3.4 24.6,3.4 Z" fill="url(#msG)" stroke="#858585" stroke-width="0.9"/><path d="M13.4,12 C12.6,20 15.4,26 15,34 M35.8,12 C36.6,20 33.8,26 34.2,34" fill="none" stroke="#c4c4c4" stroke-width="0.9"/><path d="M24.5,4 V24.4" stroke="#a5a5a5" stroke-width="0.8"/><ellipse cx="24.5" cy="11.4" rx="2.3" ry="4.6" fill="#636363" stroke="#4a4a4a" stroke-width="0.5"/></svg></div>
<div class="lbl" style="left:540px;top:362px"><span style="letter-spacing:0.03px;margin-left:0.03px">Mouse &amp;</span><br><span style="letter-spacing:0.21px;margin-left:0.21px">Touchpad</span></div>
<div class="ico" style="left:634px;top:312px"><svg viewBox="0 0 48 48"><g transform="translate(0,2.9)"><path d="M2.5,14.5 V7 Q2.5,5.5 4,5.5 H18 Q19.5,5.5 20.6,6.8 L21.8,8.2 Q22.6,9 24,9 H44 Q45.5,9 45.5,10.5 V14.5 Z" fill="url(#fBack)" stroke="#b9a79a" stroke-width="0.8"/><rect x="5.2" y="7.2" width="12" height="1.8" rx="0.6" fill="#ee8559"/><rect x="1.5" y="13.5" width="45" height="28.3" rx="1.8" fill="url(#fFront)" stroke="#c4561c" stroke-width="0.9"/><rect x="1.5" y="13.5" width="45" height="28.3" rx="1.8" fill="url(#fSide)"/><rect x="1.5" y="13.5" width="45" height="28.3" rx="1.8" fill="url(#fGlow)"/><rect x="2.4" y="14.4" width="43.2" height="26.5" rx="1.2" fill="none" stroke="#fff" stroke-opacity="0.28" stroke-width="0.8"/></g><rect x="15" y="22.9" width="18.3" height="18.5" rx="1" fill="#f4f4f4" stroke="#cfcfcf" stroke-width="0.7"/><path d="M20.7,33.5 V29.4 H22.4 V27.8 H25.7 V29.4 H27.4 V33.5 Z" fill="#1e1e1e"/><rect x="21.8" y="31.6" width="4.6" height="0.9" fill="#8a7a2a"/><path d="M32,41.6 C26,41 20.6,42 20.2,44.2 C20,46.4 30,45.6 34,45.4 C36.6,45.4 37.8,46.2 38.4,47.4" fill="none" stroke="#f4f4f4" stroke-width="1.5" stroke-linecap="round"/><path d="M32,41.6 C26,41 20.6,42 20.2,44.2 C20,46.4 30,45.6 34,45.4 C36.6,45.4 37.8,46.2 38.4,47.4" fill="none" stroke="#b9b9b9" stroke-width="0.4"/><path d="M29,36.4 L33.6,34.8 L36,40.4 L31.4,42.2 Z" fill="#dfe9f4" stroke="#8fa4bd" stroke-width="0.6"/><path d="M30.6,37 L33,36.1 L34,38.6 L31.6,39.5 Z" fill="#9db8d6"/></svg></div>
<div class="lbl" style="left:658px;top:362px"><span style="letter-spacing:0.88px;margin-left:0.88px">Network</span></div>
<div class="ico" style="left:44px;top:416px"><svg viewBox="0 0 48 48"><ellipse cx="24" cy="43.6" rx="14" ry="2.4" fill="#000" opacity="0.2"/><path d="M2.8,21.6 C6,18.6 9,17.6 12,17.8" fill="none" stroke="#5e5e5e" stroke-width="2.6" stroke-linecap="round"/><path d="M36,14.6 C41,13.6 45,15 44.6,19 C44,24 39,26.6 35,31" fill="none" stroke="#686868" stroke-width="2.6" stroke-linecap="round"/><path d="M10.6,19 V40 C10.6,43 16,45 23.8,45 C31.6,45 37,43 37,40 V19 Z" fill="url(#pwG)" stroke="#2e2e2e" stroke-width="0.6"/><path d="M10.6,8 V19.6 C10.6,22 16,23.6 23.8,23.6 C31.6,23.6 37,22 37,19.6 V8 Z" fill="url(#pwY)" stroke="#9a860e" stroke-width="0.6"/><ellipse cx="23.8" cy="8" rx="13.2" ry="3.8" fill="#efe04a" stroke="#a8940e" stroke-width="0.6"/><path d="M19.3,3.6 V7.4 C19.3,8.8 21,9.6 24.3,9.6 C27.6,9.6 29.3,8.8 29.3,7.4 V3.6 Z" fill="url(#pwY)" stroke="#9a860e" stroke-width="0.5"/><ellipse cx="24.3" cy="3.6" rx="5" ry="1.9" fill="#f4e858" stroke="#a8940e" stroke-width="0.5"/><g transform="translate(27.6,33) rotate(-20)"><rect x="-20.5" y="-3" width="12" height="1.9" rx="0.9" fill="url(#pwGold)" stroke="#8a6c1e" stroke-width="0.4"/><rect x="-15.5" y="1.4" width="7" height="1.9" rx="0.9" fill="url(#pwGold)" stroke="#8a6c1e" stroke-width="0.4"/><path d="M-9.6,-3.8 H5 L10.6,-1.8 V2.4 L5,4.2 H-9.6 Z" fill="url(#pwP)" stroke="#8c8c8c" stroke-width="0.6"/></g></svg></div>
<div class="lbl" style="left:68px;top:466px"><span style="letter-spacing:0.60px;margin-left:0.60px">Power</span></div>
<div class="ico" style="left:162px;top:416px"><svg viewBox="0 0 48 48"><ellipse cx="24" cy="44.6" rx="19" ry="1.8" fill="#000" opacity="0.15"/><path d="M9.1,24 V12.6 Q9.1,10.2 11.5,10.2 H36.8 Q39.2,10.2 39.2,12.6 V24 Z" fill="#363636" stroke="#1e1e1e" stroke-width="0.6"/><path d="M12,23.4 V3.4 H31 L36,8.4 V23.4 Z" fill="url(#prP)" stroke="#a8a8a8" stroke-width="0.7"/><path d="M31,3.4 C31.6,5.6 31.2,7.4 30.4,8.8 C32.4,8.2 34.2,8 36,8.4 Z" fill="#fff" stroke="#b0b0b0" stroke-width="0.5"/><rect x="3.2" y="38" width="41.6" height="4.6" rx="1.6" fill="#3a3a3a"/><rect x="2.4" y="22.6" width="43.2" height="16" rx="2.2" fill="url(#prB)" stroke="#8f8f8f" stroke-width="0.7"/><rect x="10.3" y="23.8" width="27.7" height="10.6" rx="0.8" fill="url(#prD)"/><rect x="40.6" y="32.4" width="2.4" height="2" fill="#a8c0a0" opacity="0.8"/><path d="M8.4,40.4 H39.6 L40.6,45 H7.4 Z" fill="#f6f6f6" stroke="#8a8a8a" stroke-width="0.6"/><rect x="8" y="39.6" width="32" height="1.2" fill="#1c1c1c"/></svg></div>
<div class="lbl" style="left:186px;top:466px"><span style="letter-spacing:0.66px;margin-left:0.66px">Printers</span></div>
<div class="ico" style="left:280px;top:416px"><svg viewBox="0 0 48 48"><ellipse cx="21.5" cy="37.6" rx="17" ry="3" fill="#000" opacity="0.13"/><path d="M3,31.7 C0.4,26 1.4,19.5 6.6,15.4 L20,12 L34.4,12.5 C40,14.5 45.5,20 47.2,26.5 L40.8,26.5 C40,22.5 38,19.5 36.1,17.8 L20,14 L7,18.6 C4.4,22.6 3.8,27 4.8,31 Z" fill="#4680c2" stroke="#3a6aa8" stroke-width="0.4"/><path d="M39,28.8 L47.7,30 C47.7,32.4 47.4,34.4 46.6,36.4 L37.9,31.1 Z" fill="#d41212"/><path d="M4.7,28 C4.7,20 8,12 11,9 C14,6.2 20,5.6 24,5.8 C27,6 30,7 31.5,8.6 L33.6,8.2 L34.2,11 C36.5,15 38.4,22 38.4,28 C38.4,33.5 31,38.1 21.5,38.1 C12,38.1 4.7,33.5 4.7,28 Z" fill="url(#sdK)" stroke="#7e7a7c" stroke-width="0.7"/><path d="M4.7,28 C4.7,20 8,12 11,9 C14,6.2 20,5.6 24,5.8 C27,6 30,7 31.5,8.6 L33.6,8.2 L34.2,11 C36.5,15 38.4,22 38.4,28 C38.4,33.5 31,38.1 21.5,38.1 C12,38.1 4.7,33.5 4.7,28 Z" fill="url(#sdS)"/><ellipse cx="21" cy="12.4" rx="11" ry="5.4" fill="#fff" opacity="0.5"/><path d="M9.4,20.5 C15,23 27,23 33.6,19.6" fill="none" stroke="#fff" stroke-width="1.2" opacity="0.55"/></svg></div>
<div class="lbl" style="left:304px;top:466px"><span style="letter-spacing:0.32px;margin-left:0.32px">Sound</span></div>
<div class="ico" style="left:398px;top:416px"><svg viewBox="0 0 48 48"><path d="M4.8,44.3 Q4,44.3 4.4,43 L10.8,26.4 Q11.2,25.4 12.2,25.4 H38.4 Q39.4,25.4 39.8,26.4 L45.4,43 Q45.8,44.3 44.8,44.3 Z" fill="#f5f5f5" stroke="#6e6e6e" stroke-width="0.9"/><path d="M5,42.4 H45" stroke="#9a9a9a" stroke-width="0.6"/><path d="M13.4,28.4 H37.2 L40.8,39 H10 Z" fill="#e6e6e6" stroke="#b4b4b4" stroke-width="0.7"/><path d="M15.6,13.1 C21,14.6 27,15.6 29.7,17.2 C26,19.6 12,19 9.8,21.6 C9,23.4 14,24 17.6,24.6" fill="none" stroke="#808080" stroke-width="0.8"/><g transform="rotate(41 23.2 32.5)"><path d="M23.2,32.5 L20.5,26.5 V-0.6 Q20.5,-3.6 23.2,-3.6 Q25.9,-3.6 25.9,-0.6 V26.5 Z" fill="url(#wcP)" stroke="#5e5e5e" stroke-width="0.6"/><path d="M20.5,26.5 V12 H25.9 V26.5 L23.2,32.5 Z" fill="#686868" opacity="0.8"/><path d="M22.3,30.4 L23.2,32.5 L24.1,30.4 Z" fill="#222"/><path d="M24.6,-2 V11.4" stroke="#fff" stroke-width="0.9" opacity="0.85"/><path d="M21.6,12.6 V26" stroke="#9a9a9a" stroke-width="0.7" opacity="0.8"/></g></svg></div>
<div class="lbl" style="left:422px;top:466px"><span style="letter-spacing:0.16px;margin-left:0.16px">Wacom Tablet</span></div>
<div class="sep" style="top:519px"></div>
<div class="sec" style="top:532px"><span style="letter-spacing:0.10px">System</span></div>
<div class="ico" style="left:44px;top:555px"><svg viewBox="0 0 48 48"><ellipse cx="24" cy="45" rx="21" ry="1.6" fill="#000" opacity="0.25"/><path d="M3.2,8 L8.2,0.6 H39.8 L45.2,8 Z" fill="url(#bkT)" stroke="#111" stroke-width="0.6"/><rect x="3.2" y="7.8" width="42" height="37" rx="1.6" fill="url(#bkF)" stroke="#0c0c0c" stroke-width="0.7"/><path d="M4,8.6 H44.4" stroke="#555" stroke-width="0.6"/><rect x="9.4" y="12.6" width="29.4" height="27" rx="0.8" fill="#141414" stroke="#383838" stroke-width="0.8"/><circle cx="24" cy="21.9" r="4.4" fill="url(#bkD)" stroke="#0a0a0a" stroke-width="0.5"/><circle cx="24" cy="21.9" r="2.7" fill="#222"/><circle cx="24.2" cy="22" r="1.3" fill="#f4f4f4"/><path d="M24.4,31.3 L19,30.4 M24.4,31.3 L27.6,27.4 M24.4,31.3 L25.6,37" stroke="#c9c9c9" stroke-width="1.1" stroke-linecap="round"/><circle cx="24.4" cy="31.3" r="1.3" fill="#e8e8e8"/></svg></div>
<div class="lbl" style="left:68px;top:605px"><span style="letter-spacing:0.18px;margin-left:0.18px">Backups</span></div>
<div class="ico" style="left:162px;top:555px"><svg viewBox="0 0 48 48"><ellipse cx="24" cy="45.4" rx="15" ry="1.8" fill="#000" opacity="0.22"/><circle cx="23.8" cy="23.6" r="21.4" fill="url(#dtR)" stroke="#777" stroke-width="0.8"/><circle cx="23.8" cy="23.6" r="17.8" fill="url(#dtF)" stroke="#8a8a8a" stroke-width="0.7"/><path d="M0,-16.6 V-14.6" transform="translate(23.8,23.6) rotate(0)" stroke="#b4b4b4" stroke-width="0.8"/><path d="M0,-16.6 V-14.6" transform="translate(23.8,23.6) rotate(30)" stroke="#b4b4b4" stroke-width="0.8"/><path d="M0,-16.6 V-14.6" transform="translate(23.8,23.6) rotate(60)" stroke="#b4b4b4" stroke-width="0.8"/><path d="M0,-16.6 V-14.6" transform="translate(23.8,23.6) rotate(90)" stroke="#b4b4b4" stroke-width="0.8"/><path d="M0,-16.6 V-14.6" transform="translate(23.8,23.6) rotate(120)" stroke="#b4b4b4" stroke-width="0.8"/><path d="M0,-16.6 V-14.6" transform="translate(23.8,23.6) rotate(150)" stroke="#b4b4b4" stroke-width="0.8"/><path d="M0,-16.6 V-14.6" transform="translate(23.8,23.6) rotate(180)" stroke="#b4b4b4" stroke-width="0.8"/><path d="M0,-16.6 V-14.6" transform="translate(23.8,23.6) rotate(210)" stroke="#b4b4b4" stroke-width="0.8"/><path d="M0,-16.6 V-14.6" transform="translate(23.8,23.6) rotate(240)" stroke="#b4b4b4" stroke-width="0.8"/><path d="M0,-16.6 V-14.6" transform="translate(23.8,23.6) rotate(270)" stroke="#b4b4b4" stroke-width="0.8"/><path d="M0,-16.6 V-14.6" transform="translate(23.8,23.6) rotate(300)" stroke="#b4b4b4" stroke-width="0.8"/><path d="M0,-16.6 V-14.6" transform="translate(23.8,23.6) rotate(330)" stroke="#b4b4b4" stroke-width="0.8"/><path d="M23.6,23.7 L14.2,14.4" stroke="#2a2a2a" stroke-width="1.3" stroke-linecap="round"/><path d="M23.6,23.7 H33" stroke="#1e1e1e" stroke-width="1.9" stroke-linecap="round"/><circle cx="23.4" cy="23.7" r="2" fill="#d9d9d9" stroke="#555" stroke-width="0.6"/></svg></div>
<div class="lbl" style="left:186px;top:605px">Date &amp; Time</div>
<div class="ico" style="left:280px;top:555px"><svg viewBox="0 0 48 48"><ellipse cx="24" cy="44.6" rx="16" ry="2.2" fill="#000" opacity="0.14"/><path d="M19.69,6.25 L19.69,1.73 L28.31,1.73 L28.31,6.25 L32.73,8.08 L35.92,4.89 L42.01,10.98 L38.82,14.17 L40.65,18.59 L45.17,18.59 L45.17,27.21 L40.65,27.21 L38.82,31.63 L42.01,34.82 L35.92,40.91 L32.73,37.72 L28.31,39.55 L28.31,44.07 L19.69,44.07 L19.69,39.55 L15.27,37.72 L12.08,40.91 L5.99,34.82 L9.18,31.63 L7.35,27.21 L2.83,27.21 L2.83,18.59 L7.35,18.59 L9.18,14.17 L5.99,10.98 L12.08,4.89 L15.27,8.08 Z M24.00,16.30 a6.6,6.6 0 1 0 0.01,0 Z" fill="url(#grG)" fill-rule="evenodd" stroke="#b2b2b2" stroke-width="0.9" stroke-linejoin="round"/><circle cx="24" cy="22.9" r="10.4" fill="none" stroke="#cfcfcf" stroke-width="6.4" opacity="0.75"/><circle cx="24" cy="22.9" r="6.6" fill="#fff" stroke="#b2b2b2" stroke-width="0.8"/></svg></div>
<div class="lbl" style="left:304px;top:605px"><span style="letter-spacing:0.45px;margin-left:0.45px">Details</span></div>
<div class="ico" style="left:398px;top:555px"><svg viewBox="0 0 48 48"><ellipse cx="30" cy="41" rx="12" ry="2.2" fill="#000" opacity="0.2"/><path d="M9.7,23.7 L36.2,13.7 M9.7,23.7 L36.2,33.7" stroke="#5e5e5e" stroke-width="3"/><path d="M9.7,23.7 L36.2,13.7 M9.7,23.7 L36.2,33.7" stroke="#c4c4c4" stroke-width="1.5"/><circle cx="9.7" cy="23.7" r="6.3" fill="url(#shB)" stroke="#6a6a6a" stroke-width="0.6"/><circle cx="36.2" cy="13.7" r="6.5" fill="url(#shB)" stroke="#6a6a6a" stroke-width="0.6"/><circle cx="36.2" cy="33.7" r="6.5" fill="url(#shB)" stroke="#6a6a6a" stroke-width="0.6"/></svg></div>
<div class="lbl" style="left:422px;top:605px"><span style="letter-spacing:0.22px;margin-left:0.22px">Sharing</span></div>
<div class="ico" style="left:516px;top:555px"><svg viewBox="0 0 48 48"><ellipse cx="24.2" cy="45" rx="14" ry="1.8" fill="#000" opacity="0.18"/><circle cx="24.2" cy="24.7" r="19.8" fill="url(#btG)" stroke="#2a5d97" stroke-width="0.8"/><circle cx="24" cy="15.4" r="3.1" fill="#fff"/><path d="M12.2,19.2 C16,20 20,20.4 24,20.4 C28,20.4 32,20 35.4,19.2 L35.8,21.2 C33,22.2 30,22.8 27.4,23.2 L27.6,29 L30.6,38 L28.4,38.8 L24,31 L19.6,38.8 L17.4,38 L20.4,29 L20.6,23.2 C18,22.8 15,22.2 11.8,21.2 Z" fill="#fff"/></svg></div>
<div class="lbl" style="left:540px;top:605px"><span style="letter-spacing:0.26px;margin-left:0.26px">Universal</span><br><span style="letter-spacing:-0.64px;margin-left:-0.64px">Access</span></div>
<div class="ico" style="left:634px;top:555px"><svg viewBox="0 0 48 48"><ellipse cx="26" cy="44.6" rx="19" ry="1.6" fill="#000" opacity="0.1"/><path d="M12.3,21.8 L12.3,23.4 C12.3,25.0 10.3,25.8 8.3,26.4 C5.0,27.5 2.0,29.2 2.0,32.0 L2.0,35.2 C2.0,37.4 8.3,38.4 14.7,38.4 C19.0,38.4 23.4,37.4 23.4,35.2 L23.4,32.0 C23.4,29.2 20.4,27.5 21.1,26.4 C19.1,25.8 17.1,25.0 17.1,23.4 L17.1,21.8 Z" fill="url(#usG)" stroke="#a9a9a9" stroke-width="0.7"/><ellipse cx="14.7" cy="16.0" rx="5.6" ry="7.0" fill="url(#usG)" stroke="#a9a9a9" stroke-width="0.7"/><path d="M12.3,23.8 Q14.7,25.8 17.1,23.8" fill="none" stroke="#b4b4b4" stroke-width="0.6" opacity="0.7"/><path d="M26.6,24.2 L26.6,25.2 C26.6,26.8 24.6,27.6 22.6,28.2 C17.4,30.7 14.4,32.8 14.4,36.5 L14.4,41.4 C14.4,43.6 22.2,44.6 30.0,44.6 C37.8,44.6 45.6,43.6 45.6,41.4 L45.6,36.5 C45.6,32.8 42.6,30.7 37.4,28.2 C35.4,27.6 33.4,26.8 33.4,25.2 L33.4,24.2 Z" fill="url(#usG)" stroke="#a9a9a9" stroke-width="0.7"/><ellipse cx="30.0" cy="15.2" rx="8.0" ry="10.2" fill="url(#usG)" stroke="#a9a9a9" stroke-width="0.7"/><path d="M26.6,25.6 Q30.0,27.6 33.4,25.6" fill="none" stroke="#b4b4b4" stroke-width="0.6" opacity="0.7"/></svg></div>
<div class="lbl" style="left:658px;top:605px"><span style="letter-spacing:-0.30px;margin-left:-0.30px">Users</span></div>
</div>
</body></html>
